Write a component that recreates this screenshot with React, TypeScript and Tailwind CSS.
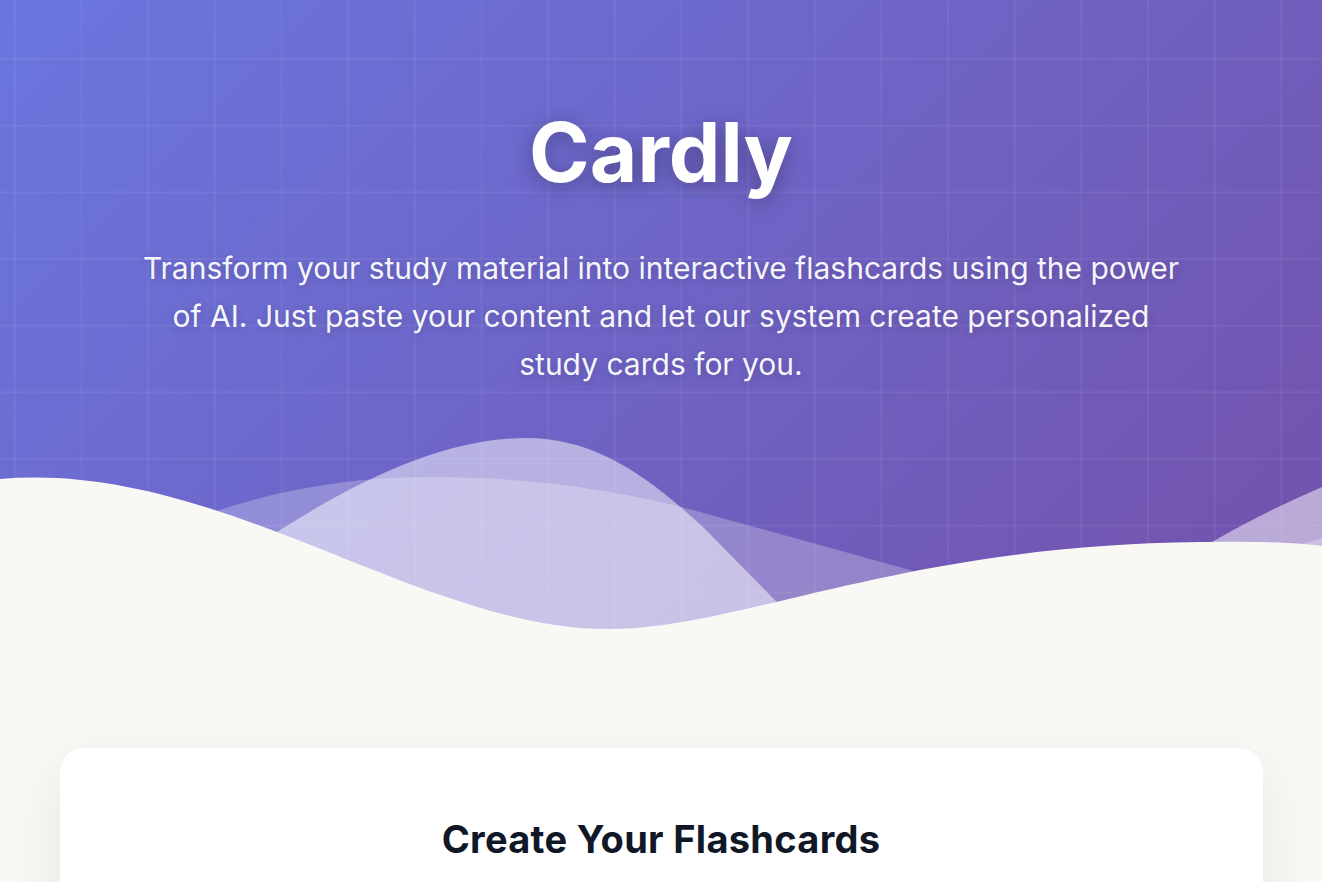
export default function App() {
  return (
    <div className="min-h-screen bg-[#f9f8f5] font-['Inter','Noto_Sans',sans-serif]">
      {/* hero */}
      <section className="relative h-[640px] overflow-hidden bg-[linear-gradient(135deg,#6a76df_0%,#7351ab_100%)]">
        <div className="absolute inset-0 bg-[linear-gradient(rgba(255,255,255,0.055)_2px,transparent_2px),linear-gradient(90deg,rgba(255,255,255,0.055)_2px,transparent_2px)] bg-[size:66.67px_66.67px] bg-[position:14px_58px]" />

        <div className="relative flex flex-col items-center px-6 pt-[112px] text-center text-white">
          <h1 className="text-[82px] font-bold leading-none [text-shadow:0_4px_20px_rgba(0,0,0,0.3)]">
            Cardly
          </h1>
          <p className="mt-[50px] max-w-[1040px] text-[30px] leading-[48px] text-white/95 [text-shadow:0_2px_10px_rgba(0,0,0,0.2)]">
            Transform your study material into interactive flashcards using the power of AI. Just paste your content and let our system create personalized study cards for you.
          </p>
        </div>

        <svg
          className="absolute bottom-0 left-0 h-[220px] w-full"
          viewBox="0 420 1322 220"
          preserveAspectRatio="none"
        >
          <path
            d="M0,640 L0,600 L100,560 C200,510 300,477 430,477 C530,477 620,490 700,512 L910,570 L1000,600 C1150,590 1250,560 1322,538 L1322,640 Z"
            fill="#ffffff"
            fillOpacity="0.25"
          />
          <path
            d="M0,640 L180,600 C300,510 420,438 526,438 C592,438 644,472 704,528 L824,650 L1080,640 C1150,570 1252,517 1322,487 L1322,640 Z"
            fill="#ffffff"
            fillOpacity="0.5"
          />
          <path
            d="M0,479 C220,460 420,630 610,629 C740,629 900,545 1200,542 C1260,541 1300,543 1322,546 L1322,640 L0,640 Z"
            fill="#f9f8f5"
          />
        </svg>
      </section>

      {/* main */}
      <main className="mx-auto max-w-[1203px] pt-[108px] pb-16">
        <div className="min-h-[420px] rounded-3xl bg-white px-12 pt-[69px] pb-12 shadow-[0_20px_60px_rgba(0,0,0,0.08)]">
          <h2 className="text-center text-[38px] font-bold leading-[1.2] tracking-[0.3px] text-gray-900">
            Create Your Flashcards
          </h2>
        </div>
      </main>
    </div>
  );
}
